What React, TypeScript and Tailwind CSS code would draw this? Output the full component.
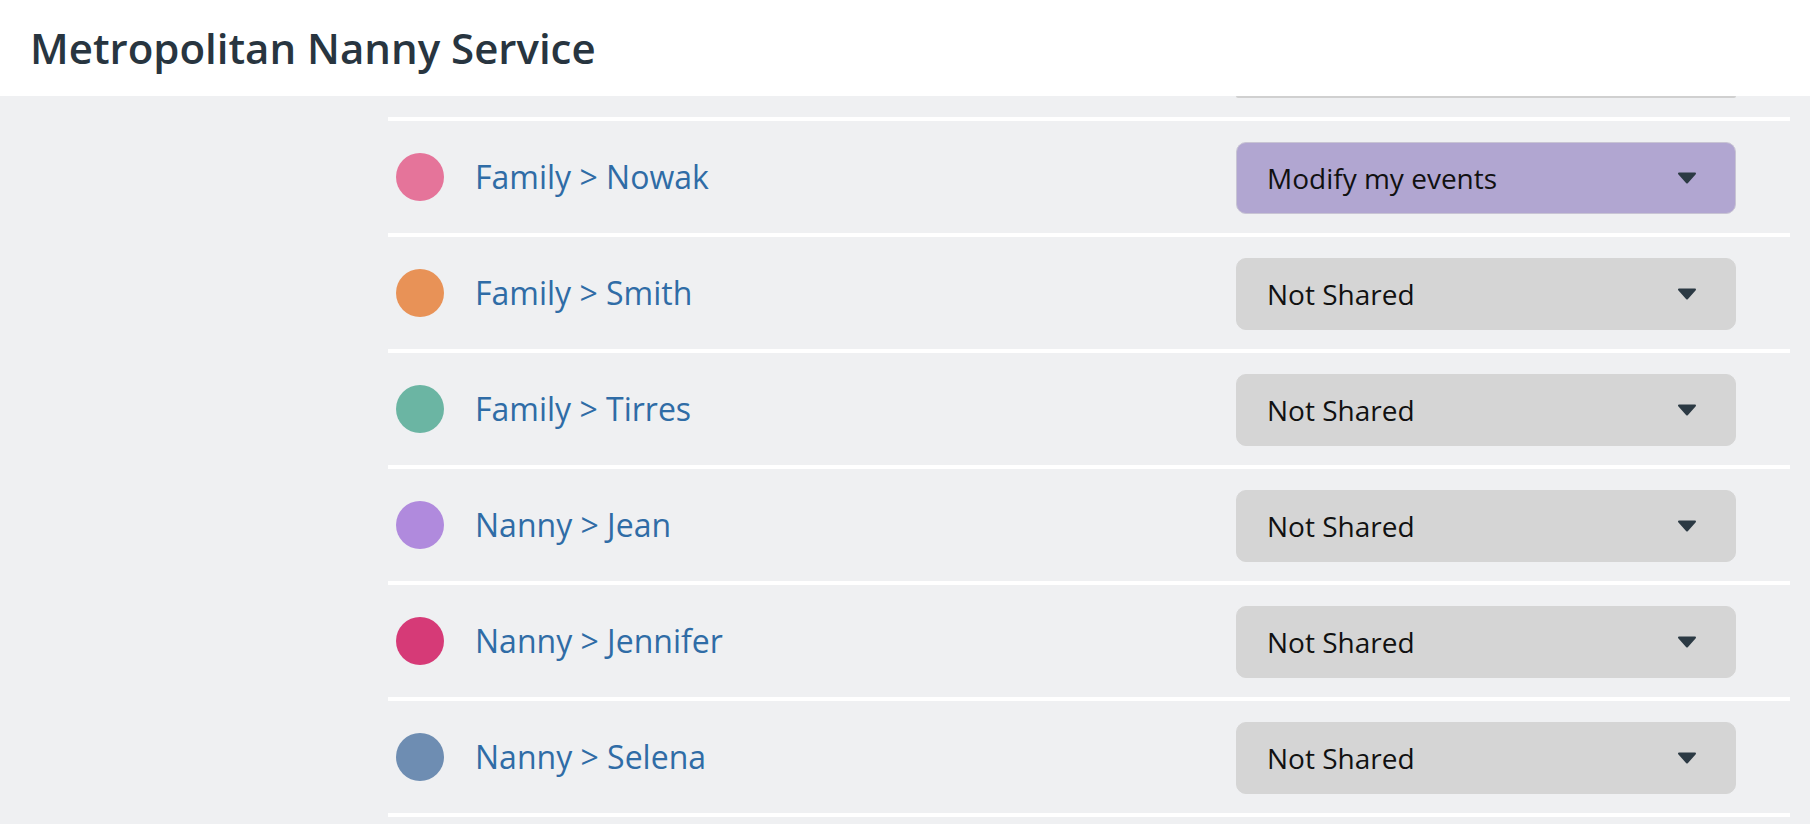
import React from "react";

type Row = { label: string; color: string; access: string };

const rows: Row[] = [
  { label: "Family > Nowak", color: "#e5749a", access: "Modify my events" },
  { label: "Family > Smith", color: "#e89257", access: "Not Shared" },
  { label: "Family > Tirres", color: "#6bb5a3", access: "Not Shared" },
  { label: "Nanny > Jean", color: "#b08add", access: "Not Shared" },
  { label: "Nanny > Jennifer", color: "#d63a77", access: "Not Shared" },
  { label: "Nanny > Selena", color: "#6e8db2", access: "Not Shared" },
];

function Caret() {
  return (
    <svg width="20" height="12" viewBox="0 0 20 12" className="shrink-0">
      <path d="M2 1.5h16L10 10.5z" fill="#2c3a44" stroke="#2c3a44" strokeWidth="2" strokeLinejoin="round" />
    </svg>
  );
}

function AccessSelect({ value }: { value: string }) {
  const shared = value !== "Not Shared";
  return (
    <div
      className={
        shared
          ? "ml-auto w-[500px] h-[72px] rounded-[10px] border border-[#c8c4d4] bg-[#b1a6d1] flex items-center justify-between pl-[30px] pr-[38px] mt-[2px]"
          : "ml-auto w-[500px] h-[72px] rounded-[10px] border border-[#d5d5d5] bg-[#d5d5d5] flex items-center justify-between pl-[30px] pr-[38px] mt-[2px]"
      }
    >
      <span className="text-[28px] text-[#111111]">{value}</span>
      <Caret />
    </div>
  );
}

export default function App() {
  return (
    <div className="h-screen w-full flex flex-col bg-[#eff0f2] overflow-hidden font-['Open_Sans','Noto_Sans',sans-serif]">
      {/* Top bar */}
      <header className="h-[96px] shrink-0 bg-white flex items-center px-[30px] relative z-10">
        <h1 className="text-[42px] font-semibold text-[#283540] leading-none">Metropolitan Nanny Service</h1>
      </header>

      {/* Calendar sharing list, scrolled a little */}
      <main className="flex-1 overflow-hidden">
        <div className="ml-[388px] mr-[20px]">
          {/* tail of the row scrolled under the header */}
          <div className="h-[21px] flex items-start pr-[54px]">
            <div className="ml-auto w-[500px] h-[2px] rounded-b-[10px] bg-[#d0d0d0]" />
          </div>
          <div className="h-1 bg-white" />
          {rows.map((row, i) => (
            <div key={i}>
              <div className="h-[112px] flex items-center pl-[8px] pr-[54px]">
                <div className="w-12 h-12 rounded-full shrink-0" style={{ backgroundColor: row.color }} />
                <span className="ml-[31px] text-[32px] text-[#2f6ca6]">{row.label}</span>
                <AccessSelect value={row.access} />
              </div>
              <div className="h-1 bg-white" />
            </div>
          ))}
        </div>
      </main>
    </div>
  );
}
